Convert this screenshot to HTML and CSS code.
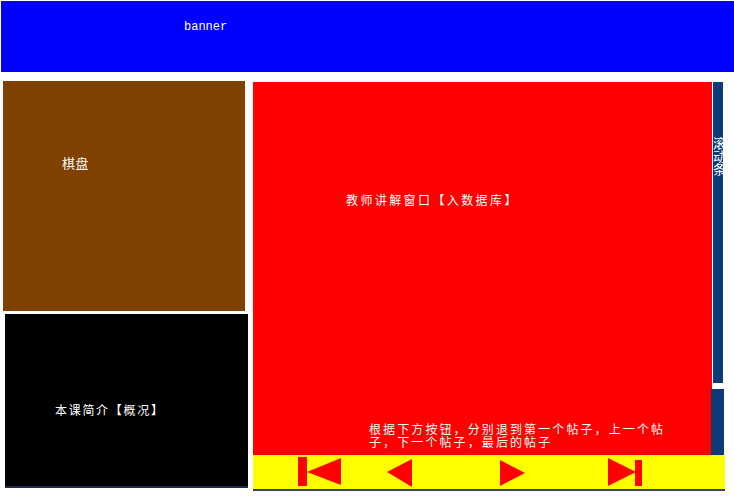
FILE: index.html
```html
<!DOCTYPE html>
<html>
<head>
<meta charset="utf-8">
<link rel="stylesheet" href="styles.css">
</head>
<body>
<div class="banner"><span class="banner-text">banner</span></div>
<div class="main">
  <div class="left">
    <div class="board"><span>棋盘</span></div>
    <div class="intro"><span>本课简介【概况】</span></div>
  </div>
  <div class="right">
    <div class="upper">
      <div class="teacher">
        <div class="teacher-title">教师讲解窗口【入数据库】</div>
        <div class="teacher-note">根据下方按钮，分别退到第一个帖子，上一个帖子，下一个帖子，最后的帖子</div>
      </div>
      <div class="scroll">
        <div class="scroll-track"><span class="scroll-label">滚动条</span></div>
        <div class="scroll-thumb"></div>
      </div>
    </div>
    <div class="nav">
      <svg class="btn btn-first" width="43" height="30" viewBox="0 0 43 30"><rect x="0" y="0" width="9" height="29" fill="#f00"/><polygon points="9,15 43,1 43,28" fill="#f00"/></svg>
      <svg class="btn btn-prev" width="25" height="30" viewBox="0 0 25 30"><polygon points="0,15 25,2 25,30" fill="#f00"/></svg>
      <svg class="btn btn-next" width="25" height="30" viewBox="0 0 25 30"><polygon points="0,3 25,16 0,29" fill="#f00"/></svg>
      <svg class="btn btn-last" width="34" height="30" viewBox="0 0 34 30"><polygon points="0,1 28,15 0,29" fill="#f00"/><rect x="27" y="3" width="7" height="26" fill="#f00"/></svg>
    </div>
  </div>
</div>
</body>
</html>
```

FILE: styles.css
```css
html, body {
  margin: 0;
  padding: 0;
  background: #ffffff;
}
body {
  width: 734px;
  height: 496px;
  overflow: hidden;
  font-family: "Noto Sans CJK SC", "Noto Sans", sans-serif;
  color: #ffffff;
}
.banner {
  margin: 1px 0 0 1px;
  width: 733px;
  height: 71px;
  background: #0000ff;
  box-sizing: border-box;
  padding: 19px 0 0 183px;
}
.banner-text {
  display: block;
  font-family: "Liberation Mono", monospace;
  font-size: 12px;
  line-height: 14px;
}
.main {
  display: flex;
  margin-top: 9px;
}
.left {
  display: flex;
  flex-direction: column;
  margin-left: 3px;
}
.board {
  width: 242px;
  height: 230px;
  background: #804000;
  box-sizing: border-box;
  padding: 75px 0 0 59px;
  font-size: 13px;
  line-height: 14px;
  letter-spacing: 0.5px;
}
.intro {
  margin: 3px 0 0 2px;
  width: 243px;
  height: 174px;
  background: #000000;
  box-sizing: border-box;
  padding: 89px 0 0 50px;
  font-size: 12px;
  line-height: 14px;
  letter-spacing: 1.7px;
  border-bottom: 2px solid #1c2a4c;
}
.right {
  display: flex;
  flex-direction: column;
  margin: 1px 0 0 5px;
}
.upper {
  display: flex;
  height: 373px;
}
.teacher {
  width: 459px;
  background: #ff0000;
  box-sizing: border-box;
  padding: 111px 0 0 93px;
  font-size: 12px;
  letter-spacing: 2.4px;
}
.teacher-title {
  line-height: 14px;
}
.teacher-note {
  margin: 215px 0 0 23px;
  width: 304px;
  line-height: 13px;
  letter-spacing: 2.1px;
}
.scroll {
  display: flex;
  flex-direction: column;
  margin-left: 1px;
  width: 10px;
}
.scroll-track {
  height: 301px;
  width: 10px;
  background: #0d3b7a;
  box-sizing: border-box;
  padding-top: 54px;
}
.scroll-label {
  display: block;
  width: 13px;
  font-size: 13px;
  line-height: 13px;
  word-break: break-all;
}
.scroll-thumb {
  margin: 6px 0 0 -2px;
  width: 13px;
  height: 66px;
  background: #0d3b7a;
}
.nav {
  display: flex;
  align-items: flex-start;
  width: 472px;
  height: 34px;
  background: #ffff00;
  border-bottom: 2px solid #34435f;
}
.btn {
  display: block;
  margin-top: 2px;
}
.btn-first { margin-left: 45px; }
.btn-prev { margin-left: 46px; }
.btn-next { margin-left: 88px; }
.btn-last { margin-left: 83px; }
```
